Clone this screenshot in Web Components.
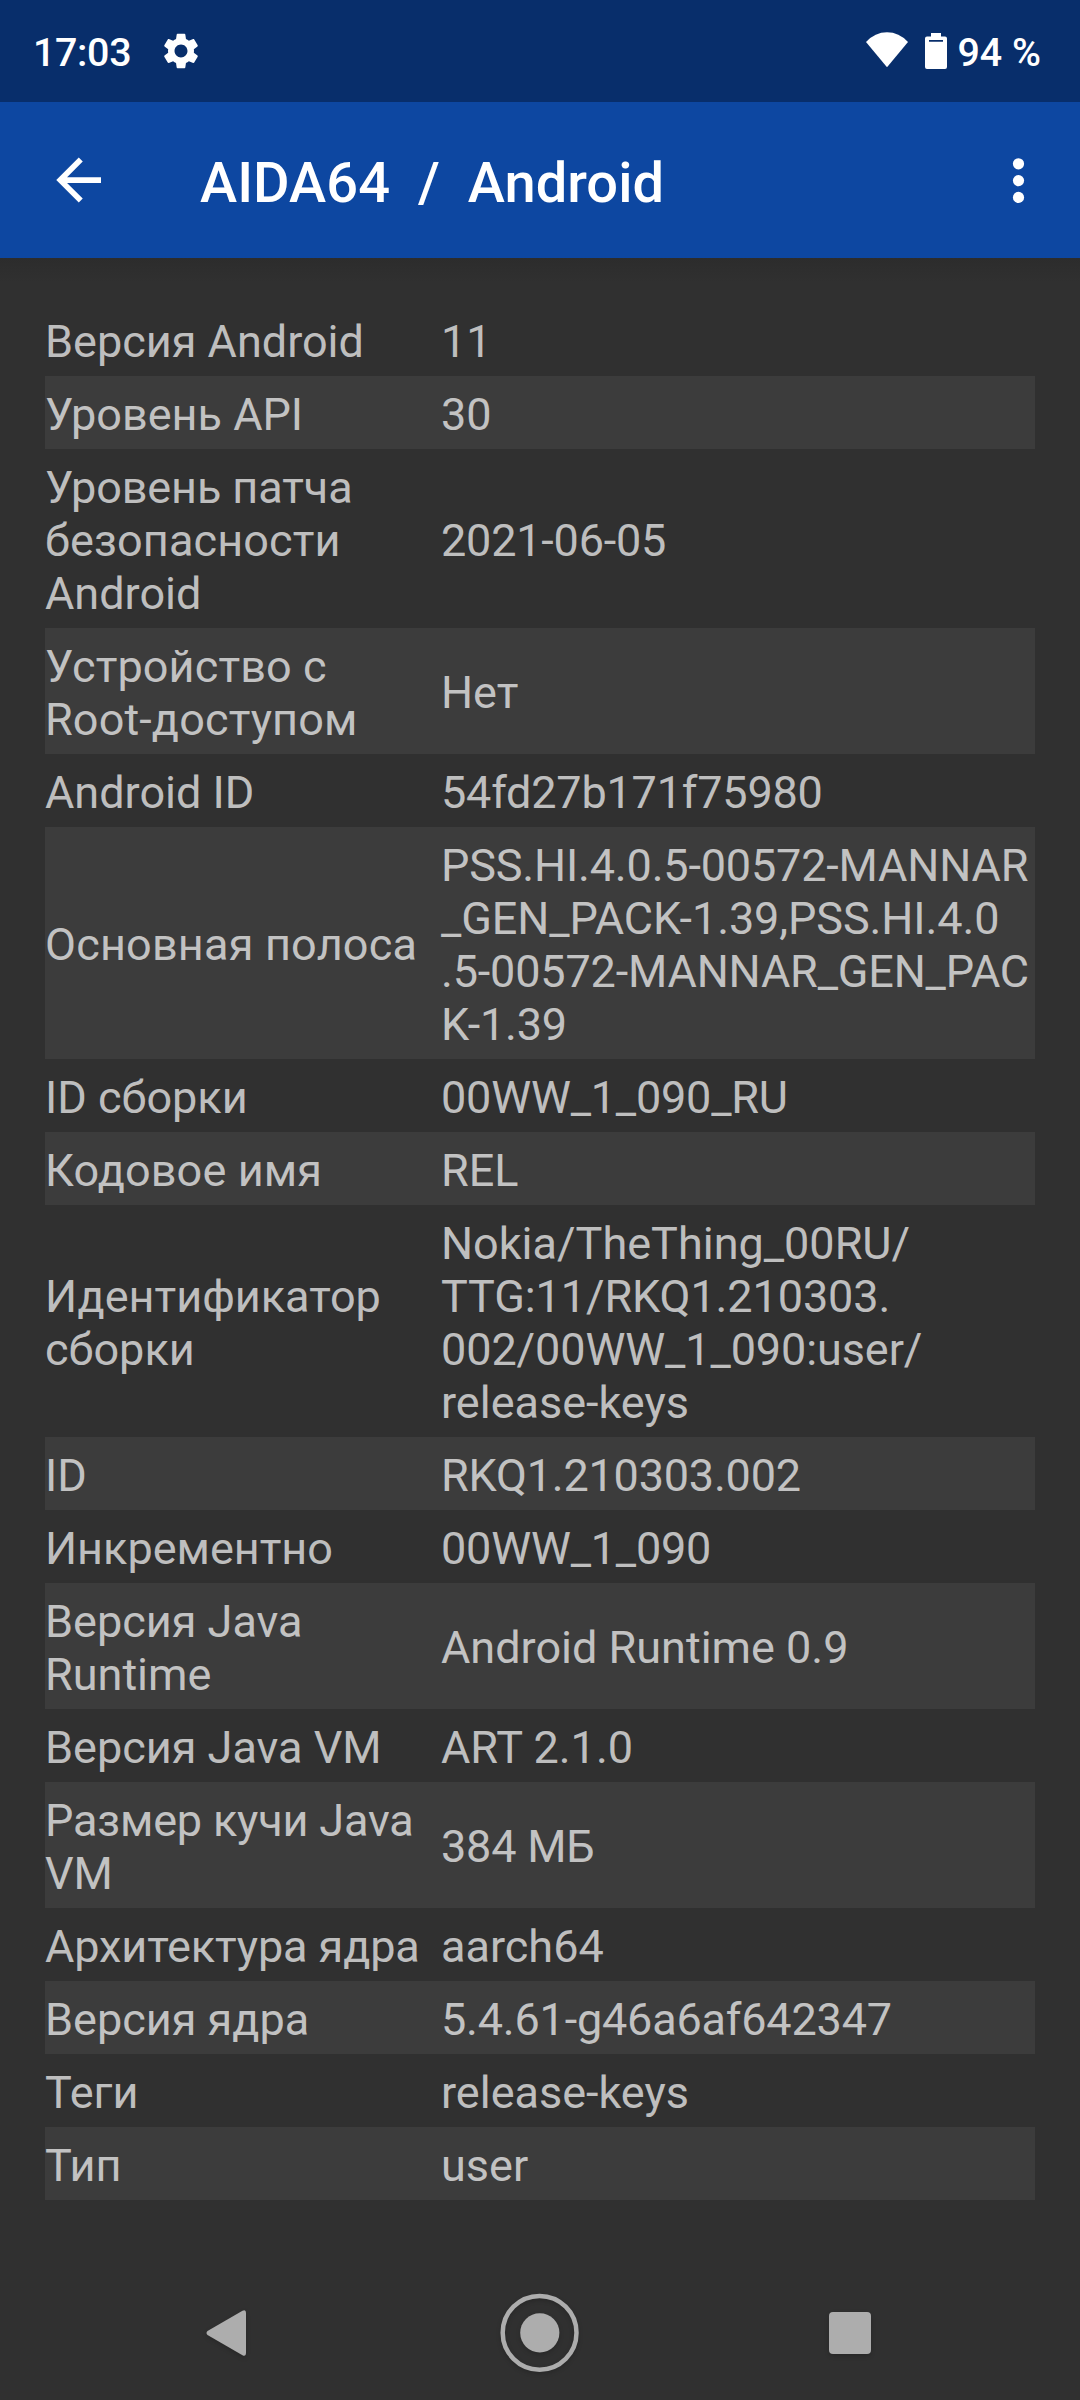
<!DOCTYPE html>
<html lang="ru">
<head>
<meta charset="utf-8">
<title>AIDA64 / Android</title>
<style>
html,body{margin:0;background:#303030}
body{width:1080px;height:2400px;overflow:hidden;font-family:Roboto,"Liberation Sans",sans-serif}
.n{letter-spacing:-.2px}
.n1{letter-spacing:-.1px}
.n2{letter-spacing:-.17px}
.w{letter-spacing:.13px}
.w2{letter-spacing:.2px}
</style>
</head>
<body>
<app-screen>
  <status-bar slot="top" time="17:03" battery="94 %"></status-bar>
  <app-toolbar slot="top">AIDA64&nbsp; /&nbsp; Android</app-toolbar>
  <info-row><span slot="label">Версия Android</span>11</info-row>
  <info-row striped><span slot="label">Уровень API</span>30</info-row>
  <info-row><span slot="label"><span class="n1">Уровень патча</span><br><span class="w">безопасности</span><br>Android</span><span class="n">2021-06-05</span></info-row>
  <info-row striped><span slot="label" class="w">Устройство с<br>Root-доступом</span>Нет</info-row>
  <info-row><span slot="label">Android ID</span><span class="n">54fd27b171f75980</span></info-row>
  <info-row striped><span slot="label" class="w2">Основная полоса</span><span class="n2">PSS.HI.4.0.5-00572-MANNAR<br><span class="n1">_GEN_PACK-1.39,PSS.HI.4.0</span><br>.5-00572-MANNAR_GEN_PAC<br>K-1.39</span></info-row>
  <info-row><span slot="label">ID сборки</span><span class="n">00WW_1_090_RU</span></info-row>
  <info-row striped><span slot="label" class="w">Кодовое имя</span>REL</info-row>
  <info-row><span slot="label">Идентификатор<br>сборки</span>Nokia/TheThing_00RU/<br><span class="n1">TTG:11/RKQ1.210303.</span><br><span class="n1">002/00WW_1_090:user/</span><br>release-keys</info-row>
  <info-row striped><span slot="label">ID</span><span class="n">RKQ1.210303.002</span></info-row>
  <info-row><span slot="label">Инкрементно</span><span class="n">00WW_1_090</span></info-row>
  <info-row striped><span slot="label">Версия Java<br>Runtime</span>Android Runtime 0.9</info-row>
  <info-row><span slot="label">Версия Java VM</span>ART 2.1.0</info-row>
  <info-row striped><span slot="label" class="n2">Размер кучи Java<br>VM</span><span class="n">384 МБ</span></info-row>
  <info-row><span slot="label" class="n1">Архитектура ядра</span>aarch64</info-row>
  <info-row striped><span slot="label">Версия ядра</span><span class="n">5.4.61-g46a6af642347</span></info-row>
  <info-row><span slot="label">Теги</span>release-keys</info-row>
  <info-row striped><span slot="label">Тип</span>user</info-row>
  <nav-bar slot="bottom"></nav-bar>
</app-screen>
<script>
const define = (name, html, setup) => customElements.define(name, class extends HTMLElement {
  constructor() {
    super();
    this.attachShadow({ mode: 'open' }).innerHTML = html;
  }
  connectedCallback() { if (setup) setup(this, this.shadowRoot); }
});

define('app-screen', `
<style>
:host{display:flex;flex-direction:column;width:1080px;height:2400px;background:#303030}
main{flex:1;padding:45px 45px 0;background:linear-gradient(#2c2c2c,#303030) 0 0/100% 24px no-repeat}
</style>
<slot name="top"></slot><main><slot></slot></main><slot name="bottom"></slot>`);

define('status-bar', `
<style>
:host{display:flex;align-items:center;box-sizing:border-box;height:102px;padding:0 39px 0 33px;background:#082e6b;color:#fff;font-size:39.4px;font-weight:500;line-height:46px}
svg{display:block;fill:#fff}
span{margin-top:3px}
.time{letter-spacing:-.35px}
.gear{margin-left:32px}
.wifi{margin:-2px 0 0 auto}
.bat{margin-left:17px}
.pct{margin-left:10px}
</style>
<span class="time"></span>
<svg class="gear" width="36" height="36" viewBox="2.2 2 19.6 20"><path d="M19.14 12.94c.04-.3.06-.61.06-.94 0-.32-.02-.64-.07-.94l2.03-1.58c.18-.14.23-.41.12-.61l-1.92-3.32c-.12-.22-.37-.29-.59-.22l-2.39.96c-.5-.38-1.03-.7-1.62-.94l-.36-2.54c-.04-.24-.24-.41-.48-.41h-3.84c-.24 0-.43.17-.47.41l-.36 2.54c-.59.24-1.13.57-1.62.94l-2.39-.96c-.22-.08-.47 0-.59.22L2.74 8.87c-.12.21-.08.47.12.61l2.03 1.58c-.05.3-.09.63-.09.94s.02.64.07.94l-2.03 1.58c-.18.14-.23.41-.12.61l1.92 3.32c.12.22.37.29.59.22l2.39-.96c.5.38 1.03.7 1.62.94l.36 2.54c.05.24.24.41.48.41h3.84c.24 0 .44-.17.47-.41l.36-2.54c.59-.24 1.13-.56 1.62-.94l2.39.96c.22.08.47 0 .59-.22l1.92-3.32c.12-.22.07-.47-.12-.61l-2.01-1.58zM12 15.6c-1.98 0-3.6-1.62-3.6-3.6s1.62-3.6 3.6-3.6 3.6 1.62 3.6 3.6-1.62 3.6-3.6 3.6z"/></svg>
<svg class="wifi" width="42" height="36" viewBox="0 0 42 36"><path d="M21 35.3 0 10Q9 .3 21 .3T42 10Z"/></svg>
<svg class="bat" width="22" height="36" viewBox="0 0 22 36"><path fill-rule="evenodd" d="M6 0h10v3.5h4a2 2 0 0 1 2 2V34a2 2 0 0 1-2 2H2a2 2 0 0 1-2-2V5.500a2 2 0 0 1 2-2h4zM4 7v1.700h14V7z"/></svg>
<span class="pct"></span>`, (el, root) => {
  root.querySelector('.time').textContent = el.getAttribute('time');
  root.querySelector('.pct').textContent = el.getAttribute('battery');
});

define('app-toolbar', `
<style>
:host{display:flex;align-items:center;box-sizing:border-box;height:156px;padding:0 38px 0 56px;background:#0d47a1;color:#fff;font-size:56px;font-weight:500;line-height:66px}
svg{display:block;fill:#fff}
.title{margin:5px auto 0 99px;white-space:nowrap;letter-spacing:.04px}
</style>
<svg width="45" height="46" viewBox="3.900 3.800 16 16.350"><path d="M20 11H7.830l5.590-5.590L12 4l-8 8 8 8 1.410-1.410L7.830 13H20v-2z"/></svg>
<span class="title"><slot></slot></span>
<svg width="46" height="46" viewBox="0 0 46 46"><circle cx="22.500" cy="6.800" r="5.600"/><circle cx="22.500" cy="23.600" r="5.600"/><circle cx="22.500" cy="40.400" r="5.600"/></svg>`);

define('info-row', `
<style>
:host{display:grid;grid-template-columns:396px 594px;align-items:center;padding:11.75px 0 8.25px;color:rgba(255,255,255,.7);font-size:45px;line-height:53px;white-space:nowrap}
:host([striped]){background:#3c3c3c}
</style>
<div><slot name="label"></slot></div><div><slot></slot></div>`);

define('nav-bar', `
<style>
:host{display:flex;justify-content:space-between;align-items:center;box-sizing:border-box;height:134px;padding:0 190px 0 186px}
svg{display:block;fill:#adadad;filter:drop-shadow(0 2px 2px rgba(0,0,0,.18))}
</style>
<svg width="80" height="80" viewBox="0 0 80 80"><path d="M21.500 38 56.500 17.800Q60 16 60 20V60Q60 64 56.500 62.200L21.500 42Q19.500 40 21.500 38Z"/></svg>
<svg width="80" height="80" viewBox="0 0 80 80" overflow="visible"><circle cx="41.600" cy="39.800" r="36.900" fill="none" stroke="#adadad" stroke-width="4.500"/><circle cx="41.800" cy="39.800" r="19.600"/></svg>
<svg width="80" height="80" viewBox="0 0 80 80"><rect x="19" y="19" width="42" height="42" rx="4"/></svg>`);
</script>
</body>
</html>
